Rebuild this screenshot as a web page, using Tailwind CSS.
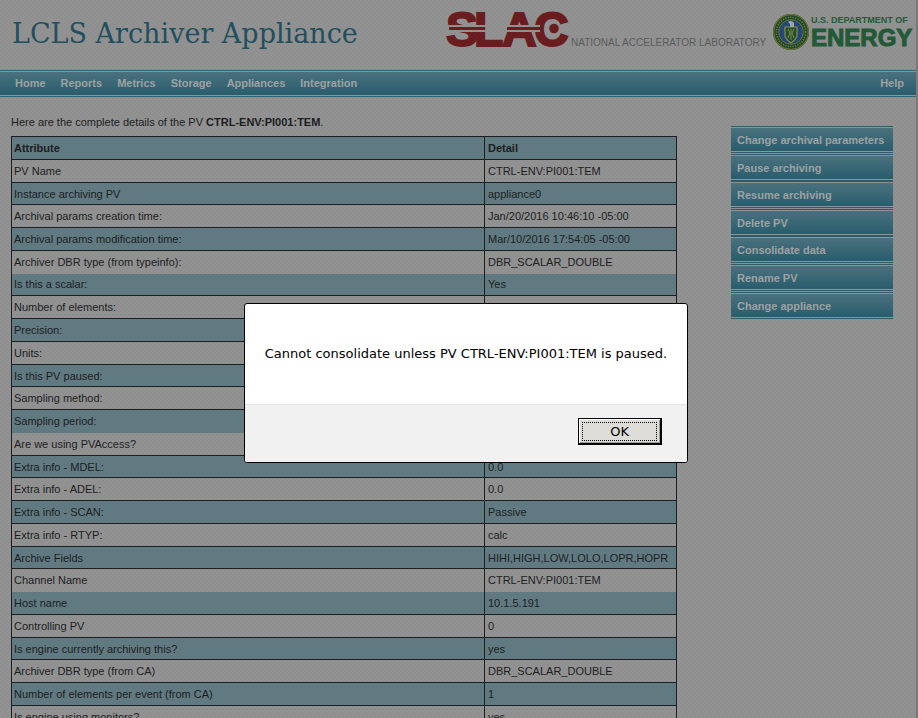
<!DOCTYPE html>
<html lang="en">
<head>
<meta charset="utf-8">
<title>LCLS Archiver Appliance</title>
<meta name="viewport" content="width=device-width, initial-scale=1">
<script src="https://cdn.jsdelivr.net/npm/@tailwindcss/browser@4"></script>
</head>
<body class="bg-[#929292] text-[#1c1e1f] text-[11px] leading-[14px] font-['Liberation_Sans',Arial,sans-serif]">
<div class="relative h-screen overflow-hidden border-r-2 border-[#797979]">
  <header class="flex h-[70px] items-start justify-between pl-3">
    <h1 class="pt-[17px] text-[27px] leading-[34px] text-[#22505e] font-['DejaVu_Serif',serif]">LCLS Archiver Appliance</h1>
    <div class="flex items-start">
      <svg class="h-[60px] w-[325px]" viewBox="445 0 325 60" role="img" aria-label="SLAC National Accelerator Laboratory">
        <text x="446 474 502 534" y="46" font-family="Liberation Sans" font-weight="700" font-size="48" fill="#6b1d20" stroke="#6b1d20" stroke-width="2">SLAC</text>
        <path d="M446 25h94v2h-94zM446 30h94v2h-94z" fill="#929292"/>
        <path d="M449 27h36v3h-36zM507 27h36v3h-36z" fill="#6b1d20"/>
        <circle cx="554" cy="28.500" r="4.800" fill="#6b1d20"/>
        <text x="571" y="46" font-family="Liberation Sans" font-size="10" fill="#5c5c5d">NATIONAL ACCELERATOR LABORATORY</text>
      </svg>
      <svg class="h-[60px] w-[146px]" viewBox="770 0 146 60" role="img" aria-label="U.S. Department of Energy">
        <circle cx="791" cy="32" r="18" fill="#1d4a2c"/>
        <circle cx="791" cy="32" r="17.300" fill="none" stroke="#6f7232" stroke-width="1.200"/>
        <circle cx="791" cy="32" r="14.600" fill="none" stroke="#75783c" stroke-width="1.600" stroke-dasharray="1.200 1.300"/>
        <circle cx="791" cy="32" r="12.300" fill="#25487b" stroke="#6f7232"/>
        <path d="M785 27h12v8c0 4-3 6-6 8c-3-2-6-4-6-8z" fill="#235034" stroke="#8d8a3e" stroke-width="1.200"/>
        <path d="M788 29l2 4l-2 5M794 29l-2 4l2 5M791 29v11" fill="none" stroke="#8d8a3e" stroke-width=".9"/>
        <path d="M788 22c2-2 5-1 6 1v4h-4v-3z" fill="#a2a5a6"/>
        <text x="811" y="23" font-family="Liberation Sans" font-size="9" font-weight="700" fill="#235a37">U.S. DEPARTMENT OF</text>
        <text x="811" y="46" font-family="Liberation Sans" font-size="24" font-weight="700" fill="#235a37" stroke="#235a37">ENERGY</text>
      </svg>
    </div>
  </header>

  <nav class="border-y border-[#2d6274]">
    <ul class="flex h-[25px] items-center gap-[15px] border-y border-[#8a979b] bg-linear-to-b from-[#4b727e] to-[#285e6e] pr-3 pb-[2px] pl-[15px] font-bold text-[#9fa3a5]">
      <li><a href="#">Home</a></li>
      <li><a href="#">Reports</a></li>
      <li><a href="#">Metrics</a></li>
      <li><a href="#">Storage</a></li>
      <li><a href="#">Appliances</a></li>
      <li><a href="#">Integration</a></li>
      <li class="ml-auto"><a href="#">Help</a></li>
    </ul>
  </nav>

  <main class="flex items-start gap-[54px] pt-[18px] pr-[23px] pl-[11px]">
    <section class="flex-1">
      <p class="mb-[7px]">Here are the complete details of the PV <b>CTRL-ENV:PI001:TEM</b>.</p>
      <table class="w-full table-fixed border-collapse border border-[#1b1f21] text-left [&_td]:border-x [&_td]:border-[#1b1f21] [&_td]:px-[2px] [&_td]:py-0 [&_th]:border-x [&_th]:border-[#1b1f21] [&_th]:px-[2px] [&_th]:py-0 [&_td:last-child]:pl-[3px] [&_th:last-child]:pl-[3px] [&_tr]:h-[23px] [&_tr]:border-t [&_tr]:border-[#1b1f21] [&_tr:nth-child(4n+3)]:h-[22px] [&_tr:nth-child(odd)]:bg-[#627b83]">
        <colgroup><col><col class="w-[192px]"></colgroup>
        <tbody>
          <tr><th scope="col">Attribute</th><th scope="col">Detail</th></tr>
          <tr><td>PV Name</td><td>CTRL-ENV:PI001:TEM</td></tr>
          <tr><td>Instance archiving PV</td><td>appliance0</td></tr>
          <tr><td>Archival params creation time:</td><td>Jan/20/2016 10:46:10 -05:00</td></tr>
          <tr><td>Archival params modification time:</td><td>Mar/10/2016 17:54:05 -05:00</td></tr>
          <tr><td>Archiver DBR type (from typeinfo):</td><td>DBR_SCALAR_DOUBLE</td></tr>
          <tr class="border-t-0!"><td>Is this a scalar:</td><td>Yes</td></tr>
          <tr><td>Number of elements:</td><td></td></tr>
          <tr><td>Precision:</td><td></td></tr>
          <tr><td>Units:</td><td></td></tr>
          <tr><td>Is this PV paused:</td><td></td></tr>
          <tr><td>Sampling method:</td><td></td></tr>
          <tr><td>Sampling period:</td><td></td></tr>
          <tr class="border-t-0!"><td>Are we using PVAccess?</td><td></td></tr>
          <tr><td>Extra info - MDEL:</td><td>0.0</td></tr>
          <tr><td>Extra info - ADEL:</td><td>0.0</td></tr>
          <tr><td>Extra info - SCAN:</td><td>Passive</td></tr>
          <tr><td>Extra info - RTYP:</td><td>calc</td></tr>
          <tr><td>Archive Fields</td><td>HIHI,HIGH,LOW,LOLO,LOPR,HOPR</td></tr>
          <tr><td>Channel Name</td><td>CTRL-ENV:PI001:TEM</td></tr>
          <tr class="border-t-0!"><td>Host name</td><td>10.1.5.191</td></tr>
          <tr><td>Controlling PV</td><td>0</td></tr>
          <tr><td>Is engine currently archiving this?</td><td>yes</td></tr>
          <tr><td>Archiver DBR type (from CA)</td><td>DBR_SCALAR_DOUBLE</td></tr>
          <tr><td>Number of elements per event (from CA)</td><td>1</td></tr>
          <tr><td>Is engine using monitors?</td><td>yes</td></tr>
        </tbody>
      </table>
    </section>
    <ul class="mt-[11px] w-[162px] [&_button]:block [&_button]:h-[25px] [&_button]:w-full [&_button]:border-y [&_button]:border-[#8a979b] [&_button]:bg-linear-to-b [&_button]:from-[#4b727e] [&_button]:to-[#285e6e] [&_button]:px-[6px] [&_button]:text-left [&_button]:font-bold [&_button]:text-[#9fa3a5] [&_li]:border-y [&_li]:border-[#2f5b69] [&_li:nth-child(odd)]:mb-px">
      <li><button type="button">Change archival parameters</button></li>
      <li><button type="button">Pause archiving</button></li>
      <li><button type="button">Resume archiving</button></li>
      <li><button type="button">Delete PV</button></li>
      <li><button type="button">Consolidate data</button></li>
      <li class="mb-px"><button type="button">Rename PV</button></li>
      <li><button type="button">Change appliance</button></li>
    </ul>
  </main>

  <div class="absolute inset-0 flex items-center justify-center bg-[conic-gradient(rgb(0_0_0/0.02)_25%,transparent_25%_50%,rgb(0_0_0/0.02)_50%_75%,transparent_75%)] bg-size-[4px_4px] pt-12 pl-4">
    <div role="alertdialog" aria-labelledby="message" class="overflow-hidden rounded-[3px] border border-black bg-white text-black font-['DejaVu_Sans',sans-serif]">
      <p id="message" class="px-5 pt-[41px] pb-[41px] text-[13px] leading-[18px]">Cannot consolidate unless PV CTRL-ENV:PI001:TEM is paused.</p>
      <div class="flex justify-end border-t border-[#e2e2e2] bg-[#f1f1f1] pt-[13px] pr-[25px] pb-[17px]">
        <button type="button" class="h-[27px] w-[84px] border border-r-2 border-b-2 border-black bg-[#dddcd7] p-[3px] text-[13px] leading-[17px] shadow-[inset_1px_1px_white,inset_-1px_-1px_#9b9a95]"><span class="block border border-dotted border-black">OK</span></button>
      </div>
    </div>
  </div>
</div>
</body>
</html>
